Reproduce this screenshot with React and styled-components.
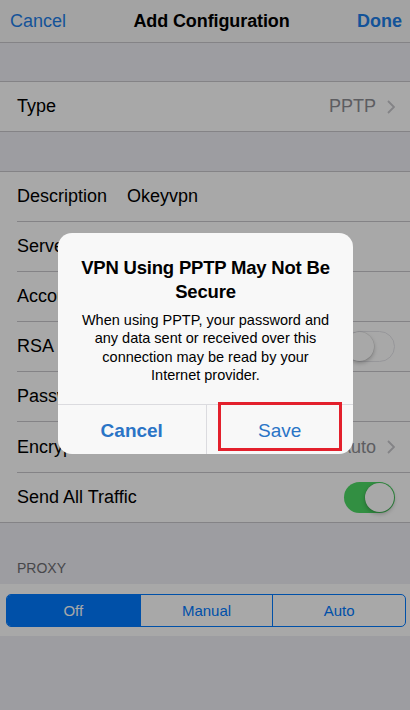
import React from 'react';
import styled, { createGlobalStyle } from 'styled-components';

const GlobalStyle = createGlobalStyle`
  html, body {
    margin: 0;
    padding: 0;
    background: #efeff4;
    font-family: 'Liberation Sans', Arial, sans-serif;
    -webkit-font-smoothing: antialiased;
  }
`;

const Screen = styled('div')`
  position: relative;
  width: 410px;
  min-height: 710px;
  background: #efeff4;
  overflow: hidden;
`;

const NavBar = styled('div')`
  height: 42px;
  display: flex;
  align-items: center;
  justify-content: space-between;
  padding: 0 8px 0 10px;
  background: #f7f7f7;
  border-bottom: 1px solid #c8c7cc;
  font-size: 18px;
`;

const NavButton = styled('span')`
  color: #1e7ee8;
  font-weight: ${(p) => (p.bold ? 700 : 400)};
`;

const NavTitle = styled('span')`
  color: #000;
  font-weight: 700;
  letter-spacing: -0.1px;
`;

const Gap = styled('div')`
  height: ${(p) => p.h}px;
`;

const Group = styled('div')`
  background: #fff;
  border-top: 1px solid #c8c7cc;
  border-bottom: 1px solid #c8c7cc;
`;

const Row = styled('div')`
  position: relative;
  height: ${(p) => p.h || 49}px;
  display: flex;
  align-items: center;
  padding: 0 15px 0 17px;
  font-size: 18px;
  color: #000;

  & + & {
    border-top: 1px solid #c8c7cc;
    margin-left: 17px;
    padding-left: 0;
  }
`;

const Label = styled('span')`
  min-width: ${(p) => (p.wide ? 110 : 0)}px;
`;

const Value = styled('span')`
  flex: 1;
  color: #000;
`;

const Detail = styled('span')`
  margin-left: auto;
  display: flex;
  align-items: center;
  gap: 11px;
  color: #8e8e93;
`;

const SwitchTrack = styled('div')`
  margin-left: auto;
  position: relative;
  width: 51px;
  height: 31px;
  border-radius: 16px;
  box-sizing: border-box;
  background: ${(p) => (p.on ? '#4cd964' : '#fff')};
  border: ${(p) => (p.on ? 'none' : '1.5px solid #e5e5ea')};
`;

const SwitchKnob = styled('div')`
  position: absolute;
  top: ${(p) => (p.on ? 1 : 0)}px;
  ${(p) => (p.on ? 'right: 1px;' : 'left: 0;')}
  width: 29px;
  height: 29px;
  border-radius: 50%;
  background: #fff;
  box-shadow: 0 2px 4px rgba(0, 0, 0, 0.25), 0 0 0 0.5px rgba(0, 0, 0, 0.1);
`;

const SectionHeader = styled('div')`
  padding: 0 17px 8px;
  font-size: 14px;
  color: #6d6d72;
  text-transform: uppercase;
`;

const SegmentBox = styled('div')`
  background: #fff;
  padding: 10px 4px 9px 6px;
`;

const Segmented = styled('div')`
  display: grid;
  grid-template-columns: repeat(3, 1fr);
  height: 33px;
  border: 1px solid #007aff;
  border-radius: 5px;
  overflow: hidden;
  box-sizing: border-box;
`;

const Segment = styled('div')`
  display: flex;
  align-items: center;
  justify-content: center;
  font-size: 15px;
  color: ${(p) => (p.active ? '#fff' : '#007aff')};
  background: ${(p) => (p.active ? '#007aff' : 'transparent')};

  & + & {
    border-left: 1px solid #007aff;
  }
`;

const Backdrop = styled('div')`
  position: absolute;
  inset: 0;
  background: rgba(0, 0, 0, 0.34);
`;

const Alert = styled('div')`
  position: absolute;
  top: 233px;
  left: 58px;
  width: 295px;
  background: #f8f8f8;
  border-radius: 14px;
  text-align: center;
`;

const AlertBody = styled('div')`
  padding: 23px 10px 20px;
`;

const AlertTitle = styled('div')`
  font-size: 18.5px;
  line-height: 24px;
  font-weight: 700;
  color: #000;
  white-space: nowrap;
  letter-spacing: -0.2px;
`;

const AlertMessage = styled('div')`
  margin: 7px 8px 0;
  font-size: 14.5px;
  line-height: 18.3px;
  color: #000;
`;

const AlertActions = styled('div')`
  display: grid;
  grid-template-columns: 1fr 1fr;
  height: 49px;
  border-top: 1px solid #dbdbdf;
`;

const AlertButton = styled('div')`
  display: flex;
  align-items: center;
  justify-content: center;
  padding-top: 2px;
  font-size: 19px;
  color: #2a74c6;
  font-weight: ${(p) => (p.bold ? 700 : 400)};

  & + & {
    border-left: 1px solid #dbdbdf;
  }
`;

const Highlight = styled('div')`
  position: absolute;
  left: 160px;
  top: 169px;
  width: 124px;
  height: 49px;
  box-sizing: border-box;
  border: 3px solid #e3202c;
`;

const Chevron = () => (
  <svg width="8" height="14" viewBox="0 0 8 14">
    <polyline points="1,1 7,7 1,13" fill="none" stroke="#c7c7cc" strokeWidth="1.8" />
  </svg>
);

const Switch = ({ on }) => (
  <SwitchTrack on={on}>
    <SwitchKnob on={on} />
  </SwitchTrack>
);

export default function App() {
  return (
    <>
      <GlobalStyle />
      <Screen>
        <NavBar>
          <NavButton>Cancel</NavButton>
          <NavTitle>Add Configuration</NavTitle>
          <NavButton bold>Done</NavButton>
        </NavBar>
        <Gap h={38} />
        <Group>
          <Row>
            <Label>Type</Label>
            <Detail>
              PPTP <Chevron />
            </Detail>
          </Row>
        </Group>
        <Gap h={39} />
        <Group>
          <Row>
            <Label wide>Description</Label>
            <Value>Okeyvpn</Value>
          </Row>
          <Row>
            <Label wide>Server</Label>
          </Row>
          <Row>
            <Label wide>Account</Label>
          </Row>
          <Row>
            <Label wide>RSA SecurID</Label>
            <Switch />
          </Row>
          <Row>
            <Label wide>Password</Label>
          </Row>
          <Row h={50}>
            <Label wide>Encryption Level</Label>
            <Detail>
              Auto <Chevron />
            </Detail>
          </Row>
          <Row>
            <Label>Send All Traffic</Label>
            <Switch on />
          </Row>
        </Group>
        <Gap h={37} />
        <SectionHeader>Proxy</SectionHeader>
        <SegmentBox>
          <Segmented>
            <Segment active>Off</Segment>
            <Segment>Manual</Segment>
            <Segment>Auto</Segment>
          </Segmented>
        </SegmentBox>
        <Backdrop />
        <Alert>
          <AlertBody>
            <AlertTitle>
              VPN Using PPTP May Not Be
              <br />
              Secure
            </AlertTitle>
            <AlertMessage>
              When using PPTP, your password and any data sent or received over this connection may be read by your
              Internet provider.
            </AlertMessage>
          </AlertBody>
          <AlertActions>
            <AlertButton bold>Cancel</AlertButton>
            <AlertButton>Save</AlertButton>
          </AlertActions>
          <Highlight />
        </Alert>
      </Screen>
    </>
  );
}
